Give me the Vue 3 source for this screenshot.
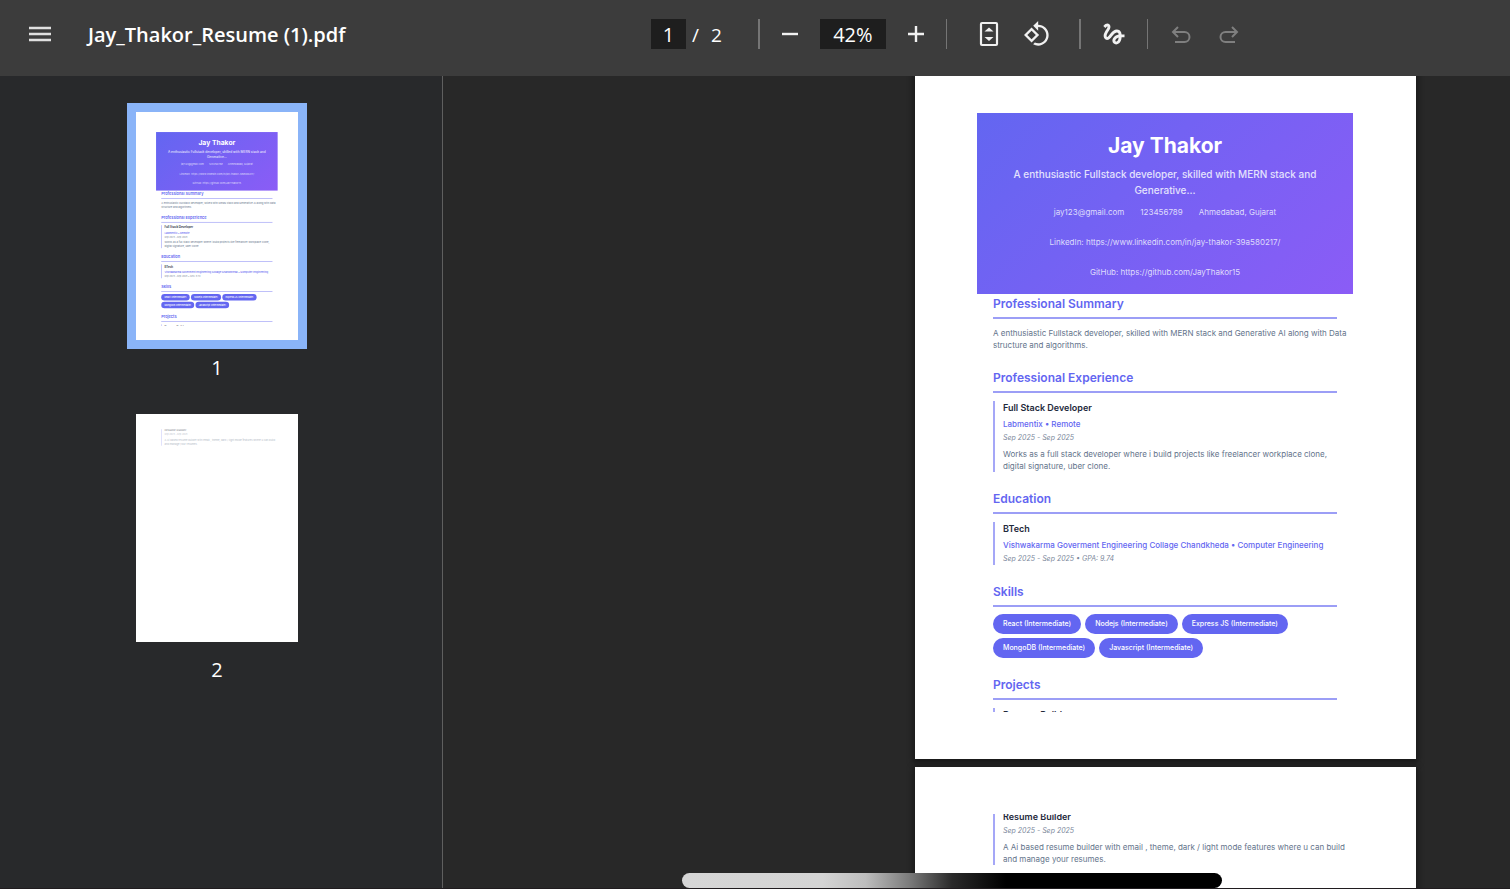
<script setup>
import { ref } from 'vue'

const fileName = 'Jay_Thakor_Resume (1).pdf'
const currentPage = ref('1')
const zoomLevel = ref('42%')
const panes = ['thumbnails', 'viewer']
const pages = [1, 2]
const skills = ['React', 'Nodejs', 'Express JS', 'MongoDB', 'Javascript']
</script>

<template>
  <div class="app">
    <header class="toolbar">
      <div class="start">
        <button class="icon-btn" aria-label="Menu">
          <svg width="24" height="24" viewBox="0 0 24 24"><path d="M1 6h22M1 12h22M1 18h22" stroke="#e0e0e0" stroke-width="2.4" /></svg>
        </button>
        <span class="file-name">{{ fileName }}</span>
      </div>
      <div class="tools">
        <input v-model="currentPage" class="field page-field" aria-label="Page number" />
        <span class="slash">/</span>
        <span class="total">2</span>
        <span class="divider wide"></span>
        <button class="icon-btn zoom-out" aria-label="Zoom out">
          <svg width="24" height="24" viewBox="0 0 24 24"><path d="M4 12h16" stroke="#f1f1f1" stroke-width="2.4" /></svg>
        </button>
        <input v-model="zoomLevel" class="field zoom-field" aria-label="Zoom level" />
        <button class="icon-btn zoom-in" aria-label="Zoom in">
          <svg width="24" height="24" viewBox="0 0 24 24"><path d="M4 12h16M12 4v16" stroke="#f1f1f1" stroke-width="2.4" /></svg>
        </button>
        <span class="divider"></span>
        <button class="icon-btn fit" aria-label="Fit to page">
          <svg width="24" height="26" viewBox="0 0 24 26"><rect x="4" y="2" width="16" height="22" rx="1" fill="none" stroke="#f1f1f1" stroke-width="2.2" /><path d="M7.500 10.500 12 6.500l4.500 4zM7.500 16h9L12 20z" fill="#f1f1f1" /></svg>
        </button>
        <button class="icon-btn rotate" aria-label="Rotate counterclockwise">
          <svg width="28" height="28" viewBox="0 0 24 24" fill="#f1f1f1"><path d="M7.340 6.410L.86 12.900l6.490 6.480 6.490-6.480-6.500-6.490zM3.690 12.900l3.660-3.660L11 12.900l-3.660 3.660-3.650-3.660zm15.670-6.260C17.610 4.880 15.300 4 13 4V.76L8.760 5 13 9.240V6c1.790 0 3.580.68 4.950 2.050 2.730 2.730 2.730 7.170 0 9.900C16.580 19.320 14.790 20 13 20c-.97 0-1.940-.21-2.840-.61l-1.490 1.490C10.020 21.620 11.510 22 13 22c2.300 0 4.610-.88 6.360-2.640 3.520-3.510 3.520-9.210 0-12.720z" /></svg>
        </button>
        <span class="divider wide"></span>
        <button class="icon-btn draw" aria-label="Draw">
          <svg width="28" height="28" viewBox="0 0 24 24" fill="#f1f1f1"><path d="M4.590 6.890c.7-.71 1.400-1.350 1.710-1.220.5.2 0 1.030-.3 1.520-.25.42-2.860 3.890-2.860 6.310 0 1.280.48 2.340 1.340 2.980.75.56 1.740.73 2.640.46 1.070-.31 1.950-1.400 3.060-2.770 1.210-1.490 2.830-3.440 4.080-3.440 1.630 0 1.650 1.010 1.760 1.790-3.780.64-5.380 3.670-5.380 5.370s1.440 3.090 3.210 3.090c1.630 0 4.290-1.330 4.690-6.100H21v-2.500h-2.470c-.15-1.650-1.090-4.200-4.030-4.200-2.250 0-4.180 1.910-4.940 2.840-.58.73-2.060 2.480-2.290 2.720-.25.3-.68.84-1.110.84-.45 0-.72-.83-.36-1.920.35-1.090 1.400-2.860 1.850-3.520.78-1.140 1.300-1.920 1.300-3.280C8.950 3.690 7.310 3 6.440 3 5.120 3 3.970 4 3.720 4.250c-.36.36-.66.66-.88.93l1.750 1.710zm9.290 11.660c-.31 0-.74-.26-.74-.72 0-.6.73-2.200 2.870-2.760-.3 2.690-1.430 3.480-2.130 3.480z" /></svg>
        </button>
        <span class="divider"></span>
        <button class="icon-btn undo" aria-label="Undo" disabled>
          <svg width="24" height="24" viewBox="0 0 24 24" fill="none" stroke="#7f7f7f" stroke-width="2"><path d="M9 5 4 10l5 5M4 10h11.500a5 5 0 0 1 0 10H6" /></svg>
        </button>
        <button class="icon-btn redo" aria-label="Redo" disabled>
          <svg width="24" height="24" viewBox="0 0 24 24" fill="none" stroke="#7f7f7f" stroke-width="2"><path d="m15 5 5 5-5 5M20 10H8.500a5 5 0 0 0 0 10H18" /></svg>
        </button>
      </div>
    </header>

    <div class="body">
      <section v-for="pane in panes" :key="pane" :class="pane" :aria-label="pane">
        <div v-for="page in pages" :key="page" class="slot">
          <div class="frame" :class="{ active: page === 1, pending: page === 2 }">
            <article class="sheet">
              <div v-if="page === 1" class="resume">
                <header class="banner">
                  <h1>Jay Thakor</h1>
                  <p class="tagline">A enthusiastic Fullstack developer, skilled with MERN stack and Generative...</p>
                  <div class="contacts">
                    <span>jay123@gmail.com</span>
                    <span>123456789</span>
                    <span>Ahmedabad, Gujarat</span>
                    <span>LinkedIn: https://www.linkedin.com/in/jay-thakor-39a580217/</span>
                    <span>GitHub: https://github.com/JayThakor15</span>
                  </div>
                </header>
                <section class="part">
                  <h2>Professional Summary</h2>
                  <p class="text">A enthusiastic Fullstack developer, skilled with MERN stack and Generative AI along with Data structure and algorithms.</p>
                </section>
                <section class="part">
                  <h2>Professional Experience</h2>
                  <div class="entry">
                    <h3>Full Stack Developer</h3>
                    <p class="org">Labmentix • Remote</p>
                    <p class="date">Sep 2025 - Sep 2025</p>
                    <p class="text">Works as a full stack developer where i build projects like freelancer workplace clone, digital signature, uber clone.</p>
                  </div>
                </section>
                <section class="part">
                  <h2>Education</h2>
                  <div class="entry">
                    <h3>BTech</h3>
                    <p class="org">Vishwakarma Goverment Engineering Collage Chandkheda • Computer Engineering</p>
                    <p class="date">Sep 2025 - Sep 2025 • GPA: 9.74</p>
                  </div>
                </section>
                <section class="part">
                  <h2>Skills</h2>
                  <ul class="chips">
                    <li v-for="skill in skills" :key="skill">{{ skill }} (Intermediate)</li>
                  </ul>
                </section>
                <section class="part">
                  <h2>Projects</h2>
                  <div class="entry">
                    <h3>Resume Builder</h3>
                  </div>
                </section>
              </div>
              <div v-else class="resume continued">
                <div class="entry">
                  <h3>Resume Builder</h3>
                  <p class="date">Sep 2025 - Sep 2025</p>
                  <p class="text">A Ai based resume builder with email , theme, dark / light mode features where u can build and manage your resumes.</p>
                </div>
              </div>
            </article>
          </div>
          <span v-if="pane === 'thumbnails'" class="label">{{ page }}</span>
        </div>
      </section>
      <div class="scroll-thumb"></div>
    </div>
  </div>
</template>

<style>
html,
body {
  margin: 0;
  background: #201c1f;
}
</style>

<style scoped>
* {
  box-sizing: border-box;
}

.app {
  display: flex;
  flex-direction: column;
  height: 100vh;
  padding-bottom: 1px;
  overflow: hidden;
  font-family: "Open Sans", "Noto Sans", sans-serif;
  color: #fff;
}

.toolbar {
  position: relative;
  z-index: 1;
  flex: none;
  display: grid;
  grid-template-columns: 651px 1fr;
  align-items: center;
  height: 76px;
  padding-bottom: 8px;
  background: #3c3c3c;
}

.start,
.tools {
  display: flex;
  align-items: center;
}

.start {
  padding-left: 28px;
}

.icon-btn {
  flex: none;
  display: flex;
  padding: 0;
  border: 0;
  background: none;
}

.file-name {
  margin-left: 36px;
  padding-top: 2px;
  font-size: 20px;
  font-weight: 600;
  line-height: 28px;
}

.field {
  flex: none;
  height: 30px;
  padding: 0;
  border: 0;
  background: #1e1e1e;
  color: #fff;
  font: inherit;
  font-size: 20px;
  text-align: center;
}

.page-field {
  width: 35px;
}

.zoom-field {
  width: 66px;
  margin-left: 18px;
}

.slash,
.total {
  padding-top: 2px;
  font-size: 19px;
  line-height: 28px;
}

.slash {
  margin-left: 6px;
}

.total {
  margin-left: 12px;
}

.divider {
  flex: none;
  width: 1px;
  height: 30px;
  background: #757575;
}

.divider.wide {
  width: 2px;
}

.total + .divider {
  margin-left: 36px;
}

.zoom-out {
  margin-left: 18px;
}

.zoom-in {
  margin-left: 18px;
}

.zoom-in + .divider {
  margin-left: 18px;
}

.fit {
  margin-left: 30px;
}

.rotate {
  margin-left: 22px;
}

.rotate + .divider {
  margin-left: 28px;
}

.draw {
  margin-left: 19px;
}

.draw + .divider {
  margin-left: 19px;
}

.undo {
  margin-left: 21px;
}

.redo {
  margin-left: 24px;
}

.body {
  position: relative;
  flex: 1;
  display: flex;
  min-height: 0;
}

.thumbnails {
  flex: none;
  display: flex;
  flex-direction: column;
  align-items: center;
  gap: 32px;
  width: 443px;
  padding: 36px 8px 0 0;
  border-right: 1px solid #5f5f5f;
  background: #28292b;
  overflow: hidden;
}

.viewer {
  flex: 1;
  display: flex;
  flex-direction: column;
  align-items: flex-end;
  gap: 8px;
  padding-right: 94px;
  background: #282828;
  overflow: hidden;
}

.viewer .slot:first-child {
  margin-top: -25px;
}

.viewer .frame {
  box-shadow: 0 2px 6px 2px rgba(0, 0, 0, 0.4);
}

.thumbnails .slot {
  display: flex;
  flex-direction: column;
  align-items: center;
  gap: 14px;
}

.thumbnails .frame {
  width: 162px;
  height: 228px;
  background: #fff;
  overflow: hidden;
}

.thumbnails .active {
  box-shadow: 0 0 0 9px #8ab4f8;
}

.thumbnails .sheet {
  transform: scale(0.3234);
  transform-origin: 0 0;
}

.thumbnails .pending .resume {
  opacity: 0.5;
}

.label {
  font-size: 20px;
  line-height: 28px;
}

.scroll-thumb {
  position: absolute;
  right: 288px;
  bottom: 0;
  width: 540px;
  height: 15px;
  border-radius: 8px;
  background: linear-gradient(90deg, #d6d6d6 0%, #d4d4d4 26%, #bdbdbd 34%, #7c7c7c 42%, #2a2a2a 50%, #000 60%);
}

.sheet {
  width: 501px;
  height: 708px;
  padding: 47px;
  background: #fff;
  font-family: Inter, sans-serif;
}

.resume {
  height: 614px;
  padding: 15px 16px 0 15px;
  overflow: hidden;
}

.sheet h1,
.sheet h2,
.sheet h3,
.sheet p,
.sheet ul {
  margin: 0;
  padding: 0;
}

.banner {
  padding: 20px 30px 16px;
  background: linear-gradient(135deg, #6366f1, #8b5cf6);
  text-align: center;
}

.banner h1 {
  font-size: 21px;
  font-weight: 700;
  line-height: 26px;
}

.sheet .tagline {
  margin-top: 7px;
  color: #e4e2fd;
  font-size: 10px;
  font-weight: 500;
  line-height: 16px;
}

.contacts {
  display: flex;
  flex-wrap: wrap;
  justify-content: center;
  gap: 18px 16px;
  margin-top: 8px;
  color: #dfdcfc;
  font-size: 8px;
  line-height: 12px;
}

.part {
  padding: 0 16px;
}

.part + .part {
  margin-top: 19px;
}

.banner + .part {
  margin-top: 2px;
}

.sheet .part h2 {
  padding-bottom: 5px;
  border-bottom: 2px solid #9c9ef6;
  color: #6366f1;
  font-size: 12px;
  font-weight: 600;
  line-height: 16px;
}

.sheet .part h2 + * {
  margin-top: 8px;
}

.sheet .text {
  margin-right: -12px;
  color: #64748b;
  font-size: 8px;
  line-height: 12px;
}

.entry {
  padding-left: 8px;
  border-left: 2px solid #a5a7f7;
}

.entry h3 {
  color: #1e293b;
  font-size: 9px;
  font-weight: 600;
  line-height: 14px;
}

.sheet .org {
  margin-top: 2px;
  color: #6366f1;
  font-size: 8px;
  font-weight: 500;
  line-height: 14px;
}

.sheet .date {
  margin-top: 1px;
  color: #7b879b;
  font-size: 7px;
  font-style: italic;
  line-height: 12px;
}

.sheet .entry .text {
  margin-top: 4px;
}

.sheet .part .chips {
  display: flex;
  flex-wrap: wrap;
  gap: 4px;
  margin-top: 7px;
  list-style: none;
}

.chips li {
  padding: 0 10px;
  border-radius: 10px;
  background: #6366f1;
  color: #fff;
  font-size: 7px;
  font-weight: 500;
  line-height: 20px;
}

.continued {
  padding: 0 32px 0 31px;
}

.continued .entry {
  margin-top: -4px;
}
</style>
